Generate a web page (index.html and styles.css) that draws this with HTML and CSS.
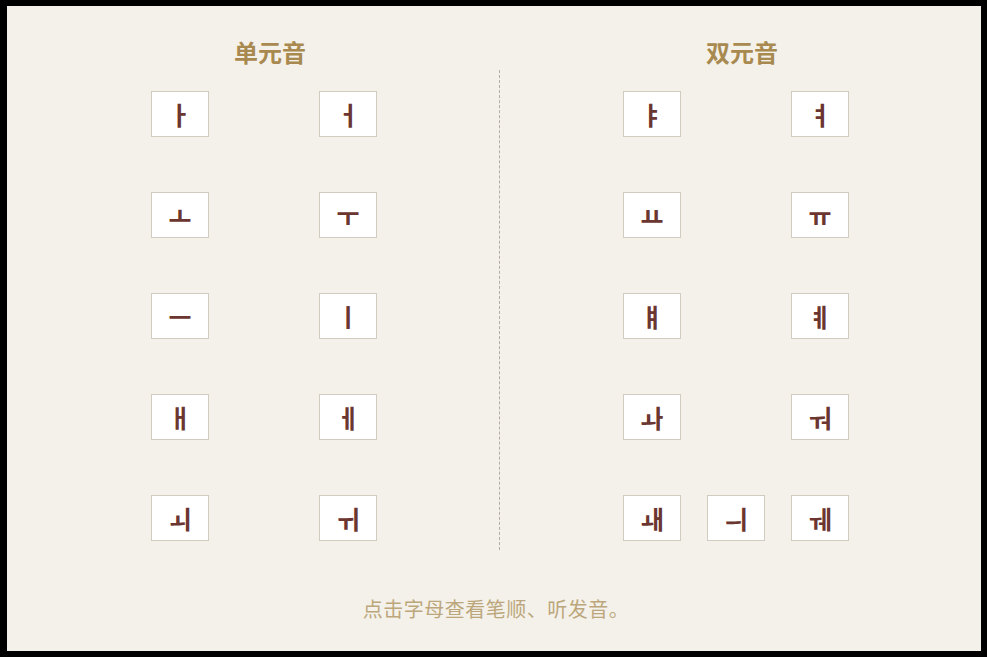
FILE: index.html
```html
<!DOCTYPE html>
<html lang="zh">
<head>
<meta charset="utf-8">
<title>元音</title>
<link rel="stylesheet" href="styles.css">
</head>
<body>
<div class="frame">
  <div class="layout">
    <section class="side side-left">
      <h2 class="title">单元音</h2>
      <div class="grid">
        <div class="key">ㅏ</div><div class="blank"></div><div class="key">ㅓ</div>
        <div class="key">ㅗ</div><div class="blank"></div><div class="key">ㅜ</div>
        <div class="key">ㅡ</div><div class="blank"></div><div class="key">ㅣ</div>
        <div class="key">ㅐ</div><div class="blank"></div><div class="key">ㅔ</div>
        <div class="key">ㅚ</div><div class="blank"></div><div class="key">ㅟ</div>
      </div>
    </section>
    <div class="divider"></div>
    <section class="side side-right">
      <h2 class="title">双元音</h2>
      <div class="grid">
        <div class="key">ㅑ</div><div class="blank"></div><div class="key">ㅕ</div>
        <div class="key">ㅛ</div><div class="blank"></div><div class="key">ㅠ</div>
        <div class="key">ㅒ</div><div class="blank"></div><div class="key">ㅖ</div>
        <div class="key">ㅘ</div><div class="blank"></div><div class="key">ㅝ</div>
        <div class="key">ㅙ</div><div class="key">ㅢ</div><div class="key">ㅞ</div>
      </div>
    </section>
  </div>
  <p class="hint">点击字母查看笔顺、听发音。</p>
</div>
</body>
</html>
```

FILE: styles.css
```css
html, body {
  margin: 0;
  padding: 0;
  background: #000;
}

body {
  width: 987px;
  height: 657px;
  overflow: hidden;
  font-family: "Noto Sans CJK SC", "Noto Sans", sans-serif;
}

.frame {
  margin: 6px 7px 0 7px;
  width: 974px;
  height: 645px;
  background: #f4f1ea;
  padding-top: 30px;
  box-sizing: border-box;
}

.layout {
  display: flex;
  align-items: flex-start;
}

.side {
  flex: none;
}

.side-left {
  width: 348px;
  padding-left: 144px;
}

.side-right {
  padding-left: 123px;
}

.title {
  margin: 0;
  width: 226px;
  padding-left: 12px;
  box-sizing: border-box;
  text-align: center;
  font-size: 24px;
  line-height: 32px;
  font-weight: 700;
  color: #a8894f;
}

.grid {
  margin-top: 23px;
  display: grid;
  grid-template-columns: repeat(3, 58px);
  grid-auto-rows: 46px;
  column-gap: 26px;
  row-gap: 55px;
}

.key {
  box-sizing: border-box;
  background: #fff;
  border: 1px solid #d2cbc0;
  display: flex;
  align-items: center;
  justify-content: center;
  font-family: "Noto Sans CJK KR", "Noto Sans", sans-serif;
  font-weight: 700;
  font-size: 25px;
  line-height: 1;
  color: #6b3530;
}

.divider {
  flex: none;
  width: 0;
  height: 480px;
  margin-top: 34px;
  border-left: 1px dashed #b3ada4;
}

.hint {
  margin: 45px 0 0 0;
  padding-left: 4px;
  text-align: center;
  font-size: 20px;
  line-height: 28px;
  letter-spacing: 0.5px;
  font-weight: 400;
  color: #bca77c;
}
```
